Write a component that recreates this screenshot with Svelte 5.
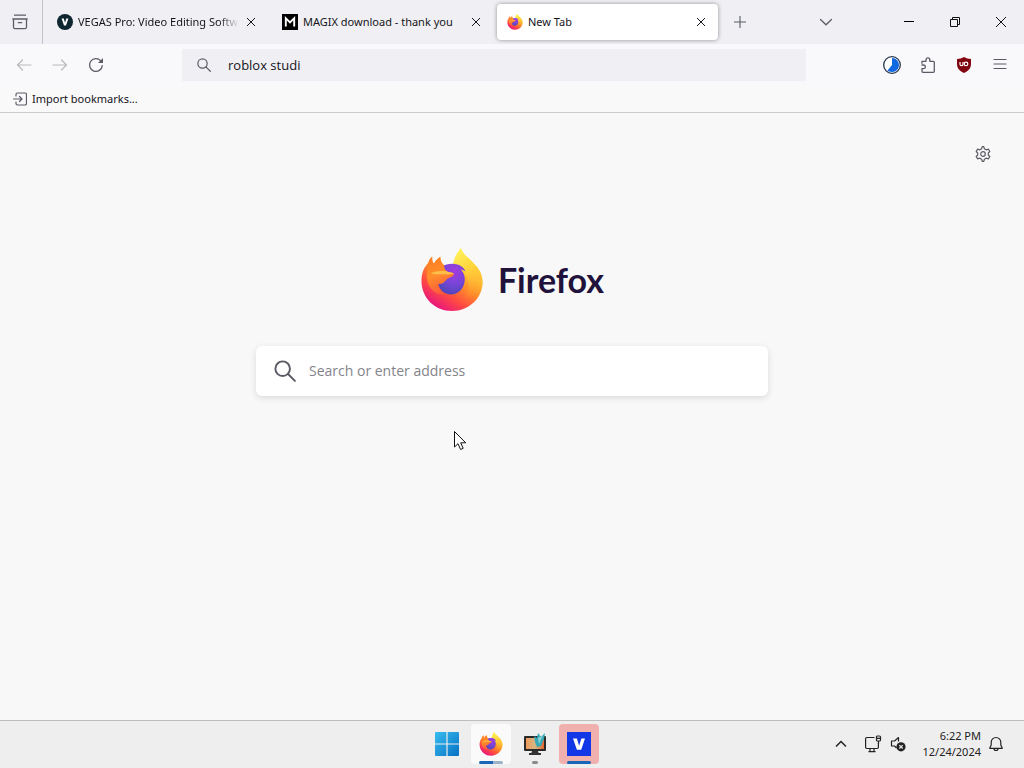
<script>
  let address = $state('roblox studi');
  let query = $state('');
</script>

{#snippet firefox(id)}
  <svg class="firefox" viewBox="0 0 64 64" aria-hidden="true">
    <defs>
      <linearGradient id="{id}-body" x1="0.8" y1="0.1" x2="0.25" y2="0.95">
        <stop offset="0" stop-color="#fff44f" />
        <stop offset="0.28" stop-color="#ffc233" />
        <stop offset="0.5" stop-color="#ff8a2a" />
        <stop offset="0.74" stop-color="#ff4a42" />
        <stop offset="1" stop-color="#e8157f" />
      </linearGradient>
      <linearGradient id="{id}-tail" x1="0.3" y1="0" x2="0.6" y2="1">
        <stop offset="0" stop-color="#fff35a" />
        <stop offset="0.45" stop-color="#ffd23a" />
        <stop offset="1" stop-color="#ff9a2c" stop-opacity="0" />
      </linearGradient>
      <radialGradient id="{id}-globe" cx="0.6" cy="0.25" r="0.8">
        <stop offset="0" stop-color="#a43be0" />
        <stop offset="0.5" stop-color="#7a45d8" />
        <stop offset="1" stop-color="#4b47b8" />
      </radialGradient>
      <linearGradient id="{id}-head" x1="0.1" y1="0" x2="0.4" y2="1">
        <stop offset="0" stop-color="#ff7a24" />
        <stop offset="0.5" stop-color="#ff8f2a" />
        <stop offset="1" stop-color="#ff5a3c" />
      </linearGradient>
    </defs>
    <path fill="url(#{id}-body)" d="M12.3 8.7C11.8 12 12.5 14 14 15.8C15.5 12.5 17.5 10.5 20.3 8.7C20.2 12.4 21.4 14.8 24 17.5L34.5 17C35 9 37.8 3.4 41 .2C43 7.3 49.8 10 54.2 16C60 21.5 62.7 28 62.7 34C62.7 50 49 63 32 63C15 63 1.5 50 1.5 33C1.5 25 4 19 8.3 15C9 12 10.5 10 12.3 8.7Z" />
    <path fill="url(#{id}-tail)" d="M33 17C34 9 37.8 3.4 41 .2C43 7.3 49.8 10 54.2 16C60 21.5 62.7 28 62.4 36C60 48 52 52 44 50C53 40 50 25 33 17Z" />
    <path fill="url(#{id}-globe)" d="M22 18.5C27 15 37 14.8 41.5 18.4C43.5 19.8 44.8 21.5 45.2 23.2C43.8 22.2 42.2 21.6 41 21.7C44 25 45.3 29 44.6 33.5C43.6 41 38 46.5 31 46.5C24 46.5 18.300 41 18.300 34C18.300 28 19 22 22 18.500Z" />
    <path fill="url(#{id}-head)" d="M12.3 8.7C11.8 12 12.5 14 14 15.8C15.5 12.5 17.5 10.5 20.3 8.7C20.2 12.6 21.8 15.2 24.2 17.2C24 19.5 24.8 21.800 26.700 23.300C28.600 24.400 31.500 24.200 34 25.500C33.500 28.800 30 29.200 27.800 30.500C25.500 32 25 34 22.600 35.200C20.500 36.200 18.800 36 17.800 35.500C18.300 40 21.500 44.500 26 46C18 48 10 42 8 35C6 28 7 20 8.300 15C9 12 10.500 10 12.300 8.700Z" />
    <path fill="#ffbd4a" d="M11 25C15 23 21 22.500 26.700 23.300C28.600 24.400 31.500 24.200 34 25.500C29 27 26 26.300 22 26.300C18 26.300 14 27 11 25Z" />
  </svg>
{/snippet}

{#snippet magnifier()}
  <svg viewBox="0 0 16 16" fill="none" stroke="currentColor" stroke-width="1.4" stroke-linecap="round" aria-hidden="true">
    <circle cx="6.3" cy="6.3" r="5.3" /><path d="M10.200 10.200l5 5" />
  </svg>
{/snippet}

{#snippet cross()}
  <svg class="s10" viewBox="0 0 10 10" fill="none" stroke="currentColor" aria-hidden="true"><path d="M1 1l8 8M9 1L1 9" /></svg>
{/snippet}

<div class="desktop">
  <header class="tabstrip">
    <button class="view" aria-label="Firefox View">
      <svg class="s16" viewBox="0 0 16 16" fill="none" stroke="currentColor" stroke-width="1.3" stroke-linecap="round" stroke-linejoin="round" aria-hidden="true">
        <path d="M2.500 1.200h11M.8 5h14.400M1.500 5v8.200q0 1.500 1.500 1.500h10q1.500 0 1.500-1.500V5M6.300 8.700h3.400" />
      </svg>
    </button>
    <div class="tabs">
      <div class="tab">
        <svg class="s16" viewBox="0 0 16 16" aria-hidden="true"><circle cx="8" cy="8" r="8" fill="#0d2630" /><path d="M4.6 4.5h2.2L8 8.7l1.3-4.2h2.1L9 11.5H7z" fill="#fff" /></svg>
        <span class="title fade">VEGAS Pro: Video Editing Softw</span>
        <button class="close" aria-label="Close VEGAS Pro tab">{@render cross()}</button>
      </div>
      <div class="tab">
        <svg class="s16" viewBox="0 0 16 16" aria-hidden="true"><path fill="#000" d="M0 0h16v16H0z" /><path d="M3.8 12.5V4.2L8 8.4l4.2-4.2v8.3" fill="none" stroke="#fff" stroke-width="1.9" /></svg>
        <span class="title">MAGIX download - thank you</span>
        <button class="close" aria-label="Close MAGIX tab">{@render cross()}</button>
      </div>
      <div class="tab active">
        <span class="s16">{@render firefox('tab')}</span>
        <span class="title">New Tab</span>
        <button class="close" aria-label="Close New Tab">{@render cross()}</button>
      </div>
    </div>
    <button class="tool" aria-label="Open a new tab">
      <svg class="s14" viewBox="0 0 14 14" stroke="currentColor" stroke-width="1.1" aria-hidden="true"><path d="M7 1v12M1 7h12" /></svg>
    </button>
    <span class="grow"></span>
    <button class="tool list" aria-label="List all tabs">
      <svg class="s14" viewBox="0 0 14 14" fill="none" stroke="currentColor" stroke-width="1.3" stroke-linecap="round" aria-hidden="true"><path d="M1.5 4.5L7 9.8l5.500-5.300" /></svg>
    </button>
    <button class="win" aria-label="Minimize"><svg class="s10" viewBox="0 0 10 10" aria-hidden="true"><path d="M0 4h10v1H0z" /></svg></button>
    <button class="win" aria-label="Restore">
      <svg class="s10" viewBox="0 0 10 10" fill="none" stroke="currentColor" aria-hidden="true"><path d="M.5 2.500h7v7h-7zM2.500 2.500v-2h7v7h-2" /></svg>
    </button>
    <button class="win" aria-label="Close"><svg class="s10" viewBox="0 0 10 10" fill="none" stroke="currentColor" aria-hidden="true"><path d="M0 0l10 10M10 0L0 10" /></svg></button>
  </header>

  <nav class="toolbar" aria-label="Navigation">
    <button class="tool dim" aria-label="Back">
      <svg class="s16" viewBox="0 0 16 16" fill="none" stroke="currentColor" stroke-width="1.2" stroke-linecap="round" aria-hidden="true"><path d="M15 8H1.500M6.500 3l-5 5 5 5" /></svg>
    </button>
    <button class="tool dim" aria-label="Forward">
      <svg class="s16" viewBox="0 0 16 16" fill="none" stroke="currentColor" stroke-width="1.2" stroke-linecap="round" aria-hidden="true"><path d="M1 8h13.500M9.500 3l5 5-5 5" /></svg>
    </button>
    <button class="tool" aria-label="Reload">
      <svg class="s16" viewBox="0 0 16 16" fill="none" stroke="currentColor" stroke-width="1.3" stroke-linecap="round" aria-hidden="true"><path d="M14.300 8.600A6.400 6.400 0 1 1 12.600 3.600L14 5" /><path d="M15 1v5h-5z" fill="currentColor" stroke="none" /></svg>
    </button>
    <label class="urlbar">
      <span class="s14">{@render magnifier()}</span>
      <input type="text" aria-label="Address" bind:value={address} />
    </label>
    <button class="tool" aria-label="Dark mode extension">
      <svg class="s18" viewBox="0 0 18 18" aria-hidden="true"><circle cx="9" cy="9" r="8.300" fill="#fff" stroke="#26364f" stroke-width="1.300" /><path d="M9 2A7 7 0 1 1 4.500 14.400L9 9z" fill="#1268e0" /></svg>
    </button>
    <button class="tool" aria-label="Extensions">
      <svg class="s16" viewBox="0 0 16 16" fill="none" stroke="currentColor" stroke-width="1.300" stroke-linejoin="round" aria-hidden="true"><path d="M2 6.800V4.300H6V2.800a1.900 1.900 0 0 1 3.800 0V4.300H13.300q1 0 1 1V14.300q0 1-1 1H3q-1 0-1-1V11.700H3.500a1.800 1.800 0 0 0 0-3.700H1.500" /></svg>
    </button>
    <button class="tool" aria-label="uBlock Origin">
      <svg class="s16" viewBox="0 0 16 16" aria-hidden="true"><path d="M8 0c2 1.200 4.600 2 7 2v5c0 4.500-3 7.300-7 9-4-1.700-7-4.500-7-9V2c2.400 0 5-.8 7-2z" fill="#800610" /><path d="M4 5v2.200q0 1.500 1.500 1.500t1.500-1.500V5" fill="none" stroke="#fff" stroke-width="1.200" /><circle cx="10" cy="6.900" r="1.800" fill="none" stroke="#fff" stroke-width="1.200" /></svg>
    </button>
    <button class="tool" aria-label="Application menu">
      <svg class="s14" viewBox="0 0 14 14" stroke="currentColor" stroke-width="1.200" stroke-linecap="round" aria-hidden="true"><path d="M1 1.500h12M1 6h12M1 10.500h12" /></svg>
    </button>
  </nav>

  <div class="bookmarks">
    <button class="import">
      <svg class="s14" viewBox="0 0 14 14" fill="none" stroke="#5b5b66" stroke-width="1.200" stroke-linecap="round" stroke-linejoin="round" aria-hidden="true"><path d="M3 4V2.500q0-1.500 1.500-1.500h7.500q1.500 0 1.500 1.500v9q0 1.500-1.500 1.500H4.500Q3 13 3 11.500V10M.6 7H9M6.500 4.500L9 7 6.500 9.500" /></svg>
      Import bookmarks...
    </button>
  </div>

  <main>
    <button class="settings" aria-label="Personalize new tab">
      <svg class="s16" viewBox="0 0 16 16" fill="none" stroke="currentColor" stroke-width="1.200" stroke-linejoin="round" aria-hidden="true"><path d="M6.600 2.800L7.200.7h1.600l.6 2.100 1.700 1 2.400-.6 1.300 2.300L13.300 7v2l1.500 1.500-1.300 2.300-2.400-.6-1.700 1-.6 2.100H7.200l-.6-2.100-1.700-1-2.400.6-1.300-2.300L2.700 9V7L1.200 5.500l1.300-2.300 2.400.6z" /><circle cx="8" cy="8" r="2.300" /></svg>
    </button>
    <h1><span class="mark">{@render firefox('brand')}</span>Firefox</h1>
    <label class="search">
      <span class="s22">{@render magnifier()}</span>
      <input type="text" aria-label="Search" placeholder="Search or enter address" bind:value={query} />
    </label>
  </main>

  <footer class="taskbar">
    <div class="apps">
      <button class="app" aria-label="Start">
        <svg class="s24" viewBox="0 0 24 24" aria-hidden="true"><defs><linearGradient id="start" x1="0" y1="0" x2="1" y2="1"><stop offset="0" stop-color="#39bdf0" /><stop offset="1" stop-color="#0671c4" /></linearGradient></defs><path fill="url(#start)" d="M1 0h10.400v11.400H0V1q0-1 1-1zM12.600 0H23q1 0 1 1v10.400H12.600zM0 12.600h11.400V24H1q-1 0-1-1zM12.600 12.600H24V23q0 1-1 1H12.600z" /></svg>
      </button>
      <button class="app open" aria-label="Firefox"><span class="s24">{@render firefox('task')}</span><i class="bar half"></i></button>
      <button class="app" aria-label="Display settings">
        <svg class="s24" viewBox="0 0 24 24" aria-hidden="true"><defs><linearGradient id="screen"><stop offset="0" stop-color="#f09a5a" /><stop offset="0.5" stop-color="#d7b783" /><stop offset="1" stop-color="#e5662f" /></linearGradient></defs><rect x="1" y="4" width="22" height="15" rx="1" fill="#292929" /><path d="M3 6h18v11H3z" fill="url(#screen)" /><path d="M9 19h6l1 3H8z" fill="#333" /><path d="M6 21h12v2H6z" fill="#333" /><path d="M11 4l3 2 1-5 3 4 4-4-1 6-3 7-4 1-2-5z" fill="#37a8b8" /><path d="M15 6l5-3-4 9z" fill="#8bd6d2" /></svg>
        <i class="bar dot"></i>
      </button>
      <button class="app alert" aria-label="VEGAS Pro">
        <svg class="s24" viewBox="0 0 24 24" aria-hidden="true"><path fill="#1237e6" d="M0 0h24v24H0z" /><path d="M6 6.500h3.900l2.200 7.300 2.300-7.300H18L14.200 17.800h-4.300z" fill="#fff" /></svg>
        <i class="bar"></i>
      </button>
    </div>
    <div class="tray">
      <button class="trayicon" aria-label="Show hidden icons"><svg class="s14" viewBox="0 0 14 14" fill="none" stroke="currentColor" stroke-width="1.500" aria-hidden="true"><path d="M2 9.500l5-5 5 5" /></svg></button>
      <button class="quick" aria-label="Network and volume">
        <svg class="s18" viewBox="0 0 18 18" fill="none" stroke="currentColor" stroke-width="1.200" aria-hidden="true"><path d="M10.500 2.500H2.800q-1.200 0-1.200 1.200v8.600q0 1.200 1.200 1.200h10.400q1.200 0 1.200-1.200V8M6 13.500V16.500M10 13.500v3M4.500 16.600h7" /><rect x="12.500" y="1" width="4" height="5" rx="1" /><path d="M14.500 6v3M12.500 3.300h4" /></svg>
        <svg class="s16" viewBox="0 0 16 16" fill="none" stroke="currentColor" stroke-width="1.200" stroke-linejoin="round" aria-hidden="true"><path d="M8.500 5.500V1.500L4.500 5H1.500v5H4.500l2 2" /><circle cx="11" cy="10.800" r="4.600" fill="currentColor" stroke="none" /><path d="M9.300 9.100l3.400 3.400M12.700 9.100l-3.400 3.400" stroke="#eee" /></svg>
      </button>
      <button class="clock"><span>6:22 PM</span><span>12/24/2024</span></button>
      <button class="trayicon" aria-label="Notifications">
        <svg class="s16" viewBox="0 0 16 16" fill="none" stroke="currentColor" stroke-width="1.200" stroke-linejoin="round" aria-hidden="true"><path d="M8 1.500a4.800 4.800 0 0 0-4.800 4.800V9L1.700 12.300h12.600L12.800 9V6.300A4.800 4.800 0 0 0 8 1.500zM6 12.500a2 2 0 0 0 4 0" /></svg>
      </button>
    </div>
  </footer>

  <svg class="cursor" viewBox="0 0 14 21" aria-hidden="true"><path d="M1.500 1.500v15.500l3.500-3.300 2.600 5.800 2.600-1.200-2.500-5.500h5z" fill="#fff" stroke="#111" /></svg>
</div>

<style>
  :global(body) { margin: 0; background: #f8f8f8; }
  .desktop {
    position: relative;
    display: flex;
    flex-direction: column;
    min-height: 100vh;
    color: #15141a;
    font: 11px/16px "Noto Sans", "Open Sans", sans-serif;
  }
  button {
    display: flex;
    align-items: center;
    justify-content: center;
    flex: none;
    margin: 0;
    padding: 0;
    border: 0;
    background: none;
    color: inherit;
    font: inherit;
  }
  input {
    flex: 1;
    min-width: 0;
    padding: 0;
    border: 0;
    outline: 0;
    background: none;
    color: inherit;
    font: inherit;
  }
  svg { display: block; flex: none; }
  span > svg { width: 100%; height: 100%; }
  .s10 { width: 10px; height: 10px; }
  .s14 { width: 14px; height: 14px; flex: none; }
  .s16 { width: 16px; height: 16px; flex: none; }
  .s18 { width: 18px; height: 18px; }
  .s22 { width: 22px; height: 22px; flex: none; }
  .s24 { width: 24px; height: 24px; }
  .firefox { overflow: visible; }
  .grow { flex: 1; }

  .tabstrip { display: flex; align-items: center; height: 44px; background: #f0f0f4; }
  .view { width: 43px; height: 44px; padding: 0 2px 0 0; border-right: 1px solid #c2c2c9; color: #5b5b66; }
  .tabs { display: flex; flex: 0 1 675px; min-width: 0; padding: 0 2px; }
  .tab {
    display: flex;
    flex: 1;
    align-items: center;
    gap: 5px;
    min-width: 0;
    height: 36px;
    margin: 0 2px;
    padding: 0 10px;
    border-radius: 4px;
  }
  .active { background: #fff; box-shadow: 0 0 4px #00000066; }
  .title { flex: 1; min-width: 0; overflow: hidden; white-space: nowrap; }
  .fade { mask-image: linear-gradient(to left, transparent, #000 20px); }
  .close { width: 14px; height: 20px; }
  .tool { width: 36px; height: 32px; color: #5b5b66; }
  .list { margin-right: 42px; }
  .win { width: 46px; height: 44px; color: #111; }

  .toolbar { display: flex; align-items: center; height: 41px; padding: 0 6px; background: #f9f9fb; }
  .dim { color: #b9b9be; }
  .urlbar {
    display: flex;
    flex: 1;
    align-items: center;
    gap: 17px;
    height: 32px;
    min-width: 0;
    margin: 0 68px;
    padding: 0 15px;
    box-sizing: border-box;
    background: #f0f0f4;
    color: #5b5b66;
    font-family: "Open Sans", "Noto Sans", sans-serif;
    font-size: 13px;
  }
  .urlbar input { color: #15141a; }
  .bookmarks { display: flex; align-items: center; height: 27px; padding: 0 13px; border-bottom: 1px solid #ccc; background: #f9f9fa; }
  .import { gap: 5px; }

  main { position: relative; display: flex; flex: 1; flex-direction: column; align-items: center; background: #f8f8f8; }
  .settings { position: absolute; top: 25px; right: 25px; width: 32px; height: 32px; color: #5b5b66; }
  h1 {
    display: flex;
    align-items: center;
    gap: 14px;
    margin: 135px 0 34px;
    color: #20123a;
    font: 700 34px/64px Lato, sans-serif;
  }
  .mark { width: 64px; height: 64px; }
  .search {
    display: flex;
    align-items: center;
    gap: 13px;
    width: 50%;
    min-width: 280px;
    height: 50px;
    padding: 0 18px;
    box-sizing: border-box;
    border-radius: 6px;
    background: #fff;
    box-shadow: 0 2px 6px #3a394426;
    color: #5b5b66;
    font-family: "Open Sans", "Noto Sans", sans-serif;
    font-size: 14px;
  }
  .search input::placeholder { color: #84848a; opacity: 1; }

  .taskbar {
    display: grid;
    grid-template-columns: 1fr auto 1fr;
    align-items: center;
    height: 45px;
    padding-bottom: 2px;
    border-top: 1px solid #bdbdbd;
    background: #eee;
  }
  .apps { display: flex; grid-column: 2; gap: 4px; padding-left: 2px; }
  .app { position: relative; width: 40px; height: 40px; border-radius: 4px; }
  .open { background: #fafafa; }
  .alert { background: #f0b0ae; }
  .bar { position: absolute; bottom: 0; left: 8px; right: 8px; height: 3px; border-radius: 2px; background: #1766b8; }
  .half { background: linear-gradient(to right, #1766b8 60%, #9bb2c8 60%); }
  .dot { left: 17px; right: 17px; background: #8a8a8a; }
  .tray { display: flex; align-items: center; justify-content: flex-end; padding-right: 20px; color: #222; }
  .quick { gap: 8px; margin: 0 16px; }
  .clock { flex-direction: column; align-items: flex-end; margin-right: 7px; }
  .cursor { position: absolute; top: 430px; left: 453px; width: 14px; height: 21px; }
</style>
